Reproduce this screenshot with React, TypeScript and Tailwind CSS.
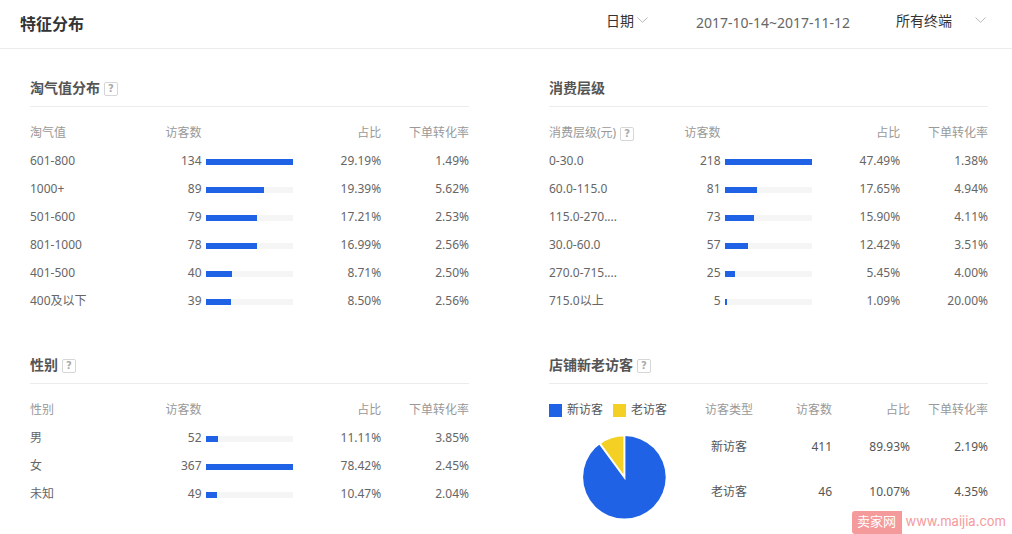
import React from "react";

type Row = { label: string; visitors: number; share: string; rate: string };

const taoqi: Row[] = [
  { label: "601-800", visitors: 134, share: "29.19%", rate: "1.49%" },
  { label: "1000+", visitors: 89, share: "19.39%", rate: "5.62%" },
  { label: "501-600", visitors: 79, share: "17.21%", rate: "2.53%" },
  { label: "801-1000", visitors: 78, share: "16.99%", rate: "2.56%" },
  { label: "401-500", visitors: 40, share: "8.71%", rate: "2.50%" },
  { label: "400及以下", visitors: 39, share: "8.50%", rate: "2.56%" },
];

const spending: Row[] = [
  { label: "0-30.0", visitors: 218, share: "47.49%", rate: "1.38%" },
  { label: "60.0-115.0", visitors: 81, share: "17.65%", rate: "4.94%" },
  { label: "115.0-270....", visitors: 73, share: "15.90%", rate: "4.11%" },
  { label: "30.0-60.0", visitors: 57, share: "12.42%", rate: "3.51%" },
  { label: "270.0-715....", visitors: 25, share: "5.45%", rate: "4.00%" },
  { label: "715.0以上", visitors: 5, share: "1.09%", rate: "20.00%" },
];

const gender: Row[] = [
  { label: "男", visitors: 52, share: "11.11%", rate: "3.85%" },
  { label: "女", visitors: 367, share: "78.42%", rate: "2.45%" },
  { label: "未知", visitors: 49, share: "10.47%", rate: "2.04%" },
];

const visitorTypes: Row[] = [
  { label: "新访客", visitors: 411, share: "89.93%", rate: "2.19%" },
  { label: "老访客", visitors: 46, share: "10.07%", rate: "4.35%" },
];

function Help({ label }: { label: string }) {
  return (
    <button
      type="button"
      aria-label={label}
      className="mt-[2px] flex size-[14px] shrink-0 items-center justify-center rounded-[2px] border border-[#d6d6d6] font-['DejaVu_Sans',sans-serif] text-[10px] leading-3 font-bold text-[#aaaaaa]"
    >
      ?
    </button>
  );
}

function Chevron() {
  return (
    <svg
      className="pointer-events-none absolute top-[6px] right-[2px] h-[6px] w-[11px]"
      viewBox="0 0 11 6"
      fill="none"
      stroke="#b8b8b8"
      aria-hidden="true"
    >
      <path d="M0.5 0.5 5.5 5.3 10.5 0.5" />
    </svg>
  );
}

function Section({
  title,
  help,
  children,
}: {
  title: string;
  help?: boolean;
  children: React.ReactNode;
}) {
  return (
    <section>
      <div className="flex h-[37px] items-center gap-1 border-b border-[#ececec]">
        <h2 className="text-sm leading-5 font-bold text-[#555555]">{title}</h2>
        {help && <Help label={title + "说明"} />}
      </div>
      {children}
    </section>
  );
}

function BarTable({ name, help, rows }: { name: string; help?: boolean; rows: Row[] }) {
  const max = Math.max(...rows.map((r) => r.visitors));
  return (
    <table className="mt-3 w-full table-fixed text-xs">
      <thead>
        <tr className="h-7 text-[#999999]">
          <th className="p-0 text-left font-normal whitespace-nowrap">
            <span className="flex items-center gap-1">
              {name}
              {help && <Help label={name + "说明"} />}
            </span>
          </th>
          <th className="p-0 pr-1 text-right font-normal">访客数</th>
          <td className="p-0" />
          <th className="p-0 text-right font-normal">占比</th>
          <th className="p-0 text-right font-normal">下单转化率</th>
        </tr>
      </thead>
      <tbody>
        {rows.map((r) => (
          <tr key={r.label} className="h-7 text-[#666666]">
            <td className="p-0 whitespace-nowrap">{r.label}</td>
            <td className="p-0 pr-1 text-right">{r.visitors}</td>
            <td className="p-0 pt-[2px]">
              <div className="h-[6px] bg-[#f5f5f5]">
                <div
                  className="h-full bg-[#2062e6]"
                  style={{ width: `${(r.visitors / max) * 100}%` }}
                />
              </div>
            </td>
            <td className="p-0 text-right">{r.share}</td>
            <td className="p-0 text-right">{r.rate}</td>
          </tr>
        ))}
      </tbody>
    </table>
  );
}

function Pie() {
  return (
    <svg className="mt-[10px] ml-8 size-[86px]" viewBox="0 0 86 86" role="img" aria-label="新老访客占比">
      <circle cx="43.4" cy="43.3" r="41.3" fill="#2062e6" />
      <path d="M43.4 43.3 V1.3 A42 42 0 0 0 18.6 9.4 Z" fill="#f4d024" stroke="#ffffff" strokeWidth="2" />
    </svg>
  );
}

export default function App() {
  return (
    <div className="relative min-h-screen bg-white font-['Noto_Sans','Noto_Sans_CJK_SC',sans-serif]">
      <header className="flex h-[49px] items-center justify-between border-b border-[#ececec] pr-6 pl-5">
        <h1 className="text-base leading-6 font-bold text-[#333333]">特征分布</h1>
        <div className="flex items-center gap-11 text-sm leading-5">
          <div className="relative -mt-[6px] w-11">
            <select
              aria-label="日期类型"
              className="block h-5 w-full appearance-none bg-transparent p-0 text-[#333333] outline-none"
            >
              <option>日期</option>
            </select>
            <Chevron />
          </div>
          <span className="-mt-[2px] min-w-[158px] text-center text-[#666666]">2017-10-14~2017-11-12</span>
          <div className="relative -mt-[6px] w-[92px]">
            <select
              aria-label="终端"
              className="block h-5 w-full appearance-none bg-transparent p-0 text-[#333333] outline-none"
            >
              <option>所有终端</option>
            </select>
            <Chevron />
          </div>
        </div>
      </header>

      <main className="grid grid-cols-2 gap-x-20 gap-y-8 pt-[21px] pr-6 pl-[30px]">
        <Section title="淘气值分布" help>
          <BarTable name="淘气值" rows={taoqi} />
        </Section>
        <Section title="消费层级">
          <BarTable name="消费层级(元)" help rows={spending} />
        </Section>
        <Section title="性别" help>
          <BarTable name="性别" rows={gender} />
        </Section>
        <Section title="店铺新老访客" help>
          <div className="mt-3 flex text-xs text-[#555555]">
            <div className="w-[155px] shrink-0">
              <ul className="flex h-7 items-center gap-[10px]">
                <li className="flex items-center gap-[5px]">
                  <span className="size-[13px] bg-[#2062e6]" />
                  新访客
                </li>
                <li className="flex items-center gap-[5px]">
                  <span className="size-[13px] bg-[#f4d024]" />
                  老访客
                </li>
              </ul>
              <Pie />
            </div>
            <div className="min-w-0 flex-1">
              <table className="w-full table-fixed">
                <thead>
                  <tr className="h-7 text-[#999999]">
                    <th className="w-[50px] p-0 text-center font-normal whitespace-nowrap">访客类型</th>
                    <th className="p-0 text-right font-normal">访客数</th>
                    <th className="p-0 text-right font-normal">占比</th>
                    <th className="p-0 text-right font-normal">下单转化率</th>
                  </tr>
                </thead>
                <tbody>
                  {visitorTypes.map((r) => (
                    <tr key={r.label} className="h-[45px]">
                      <td className="p-0 text-center">{r.label}</td>
                      <td className="p-0 text-right">{r.visitors}</td>
                      <td className="p-0 text-right">{r.share}</td>
                      <td className="p-0 text-right">{r.rate}</td>
                    </tr>
                  ))}
                </tbody>
              </table>
            </div>
          </div>
        </Section>
      </main>

      <a
        href="#"
        className="absolute right-[6px] bottom-0 flex h-[23px] gap-1 font-['Inter','Noto_Sans_CJK_SC',sans-serif] text-[13px] leading-[21px] text-[#f59a9b]"
      >
        <span className="w-[50px] rounded-l-[3px] bg-[#f59a9b] text-center text-white">卖家网</span>
        <span>www.maijia.com</span>
      </a>
    </div>
  );
}
